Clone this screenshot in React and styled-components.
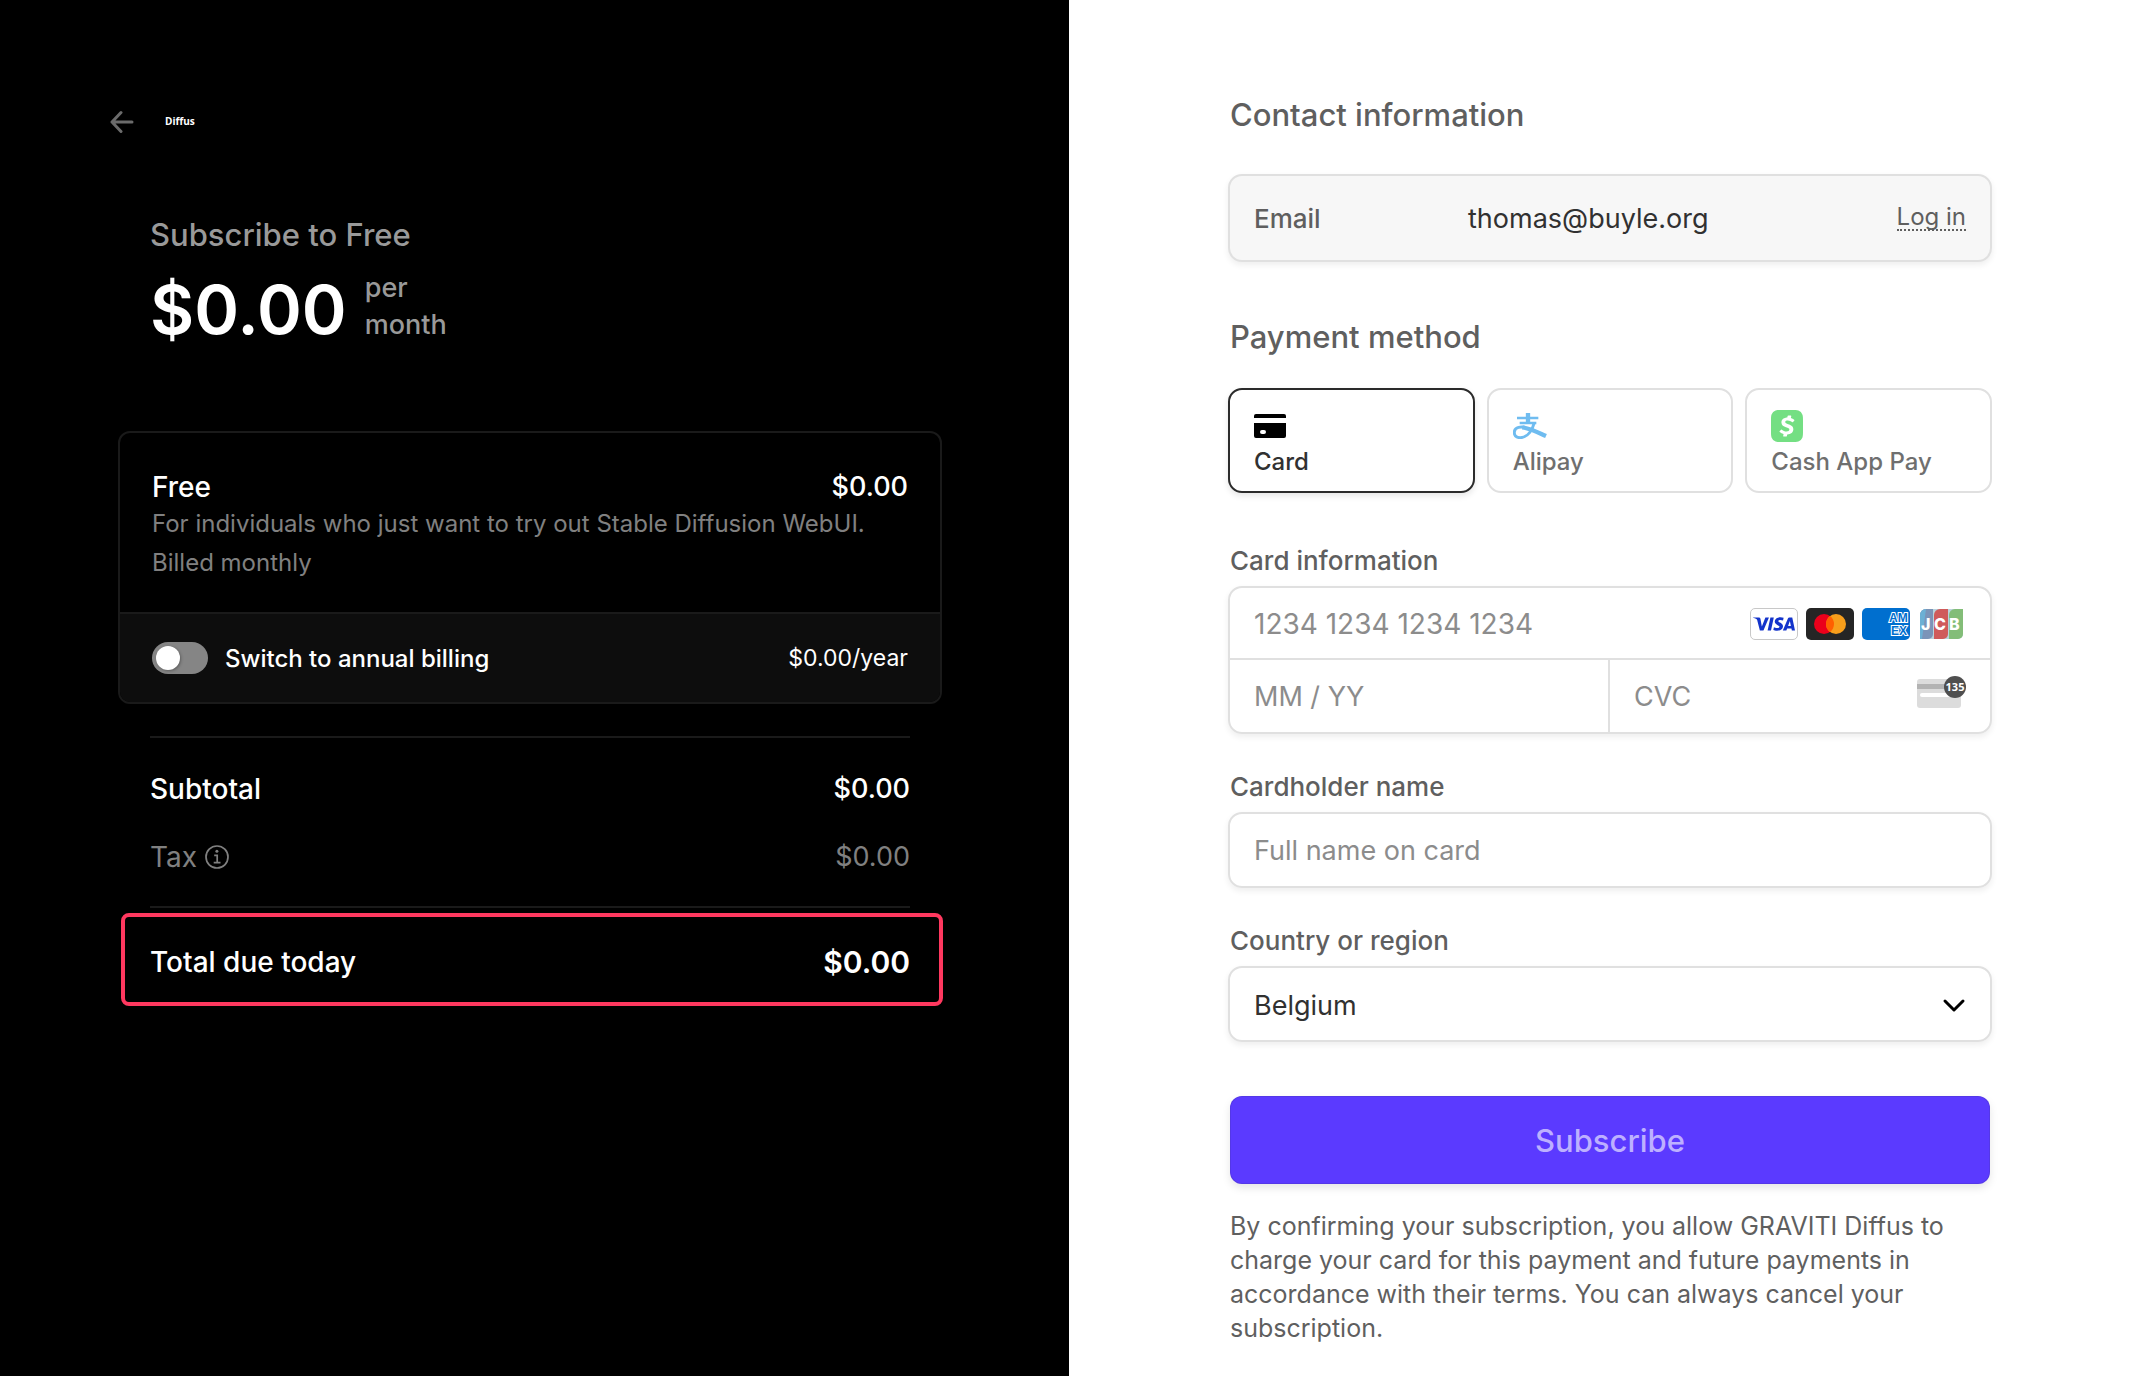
import React, { useState } from "react";
import styled, { createGlobalStyle } from "styled-components";
import { SiVisa, SiCashapp } from "react-icons/si";

const GlobalStyle = createGlobalStyle`
  *, *::before, *::after { box-sizing: border-box; }
  body {
    margin: 0;
    background: #fff;
    font-family: Inter, "Liberation Sans", sans-serif;
    -webkit-font-smoothing: antialiased;
  }
  button, input, select { font: inherit; color: inherit; }
`;

const Page = styled.div`
  display: grid;
  grid-template-columns: 1fr 1fr;
  min-height: 100vh;
`;

const SummaryPane = styled.section`
  display: flex;
  justify-content: flex-end;
  padding: 106px 159px 40px 40px;
  background: #000;
  color: #fff;
`;

const PaymentPane = styled.main`
  padding: 95px 40px 31px 161px;
  background: #fff;
  color: #313131;
`;

const Column = styled.div`
  width: 100%;
  max-width: 760px;
`;

const Header = styled.header`
  display: flex;
  align-items: center;
  gap: 31px;
  height: 32px;
  margin-left: -40px;
`;

const BackLink = styled.a`
  display: flex;
  color: #6b6b6b;
`;

const Brand = styled.span`
  padding-bottom: 2px;
  font: 700 10px/14px "Open Sans", "Noto Sans", sans-serif;
`;

const PlanTitle = styled.h1`
  margin: 77px 0 0;
  font-size: 31px;
  font-weight: 500;
  line-height: 40px;
  color: #999;
`;

const PriceRow = styled.div`
  display: flex;
  align-items: last baseline;
  gap: 18px;
  margin-top: 12px;
`;

const Price = styled.span`
  font-size: 68px;
  font-weight: 600;
  line-height: 84px;
`;

const Period = styled.span`
  width: min-content;
  font-size: 27px;
  font-weight: 500;
  line-height: 37px;
  color: #999;
`;

const PlanCard = styled.div`
  margin: 80px -32px 32px;
  border: 2px solid #1a1a1a;
  border-radius: 12px;
  overflow: hidden;
`;

const PlanBody = styled.div`
  padding: 37px 32px 30px;
`;

const PlanText = styled.p`
  margin: 0;
  font-size: 24px;
  line-height: 39px;
  color: #808080;
`;

const PlanFooter = styled.div`
  display: flex;
  align-items: center;
  height: 90px;
  padding: 0 32px;
  border-top: 2px solid #1a1a1a;
  background: #0d0d0d;
  font-size: 23px;
`;

const SwitchLabel = styled.label`
  display: flex;
  align-items: center;
  gap: 17px;
  margin-right: auto;
  font-size: 24px;
  font-weight: 500;
`;

const Switch = styled.input`
  appearance: none;
  display: flex;
  width: 56px;
  height: 32px;
  margin: 0;
  padding: 4px;
  border-radius: 16px;
  background: #858585;
  cursor: pointer;

  &::before {
    content: "";
    width: 24px;
    height: 24px;
    border-radius: 50%;
    background: #fff;
    box-shadow: 1px 1px 3px rgba(0, 0, 0, 0.3);
  }
  &:checked { justify-content: flex-end; }
`;

const Line = styled.div`
  display: flex;
  align-items: center;
  justify-content: space-between;
  font-size: 28px;
  font-weight: ${(p) => (p.$muted ? 400 : 500)};
  line-height: 34px;
  color: ${(p) => (p.$muted ? "#808080" : "#fff")};
`;

const Amount = styled.span`
  font-size: ${(p) => (p.$total ? 30 : 27)}px;
  font-weight: ${(p) => (p.$total ? 600 : "inherit")};
`;

const Totals = styled.div`
  display: flex;
  flex-direction: column;
  gap: 34px;
  padding: 34px 0 32px;
  border: solid #1a1a1a;
  border-width: 2px 0;
`;

const TaxLabel = styled.span`
  display: flex;
  align-items: center;
  gap: 8px;
`;

const TotalBox = styled.div`
  margin: 5px -33px 0 -29px;
  padding: 28px 29px 23px 25px;
  border: 4px solid #ff385f;
  border-radius: 8px;
`;

const SectionTitle = styled.h2`
  margin: 0;
  font-size: 31px;
  font-weight: 500;
  line-height: 40px;
  color: #5f5f5f;
`;

const Outlined = styled.div`
  margin: 0 -2px;
  border: 2px solid #e0e0e0;
  border-radius: 14px;
  box-shadow: 0 3px 6px rgba(0, 0, 0, 0.07);
`;

const ContactBox = styled(Outlined)`
  display: flex;
  align-items: center;
  height: 88px;
  margin-top: 39px;
  margin-bottom: 55px;
  padding: 0 24px;
  background: #f7f7f7;
`;

const ContactLabel = styled.span`
  flex: 0 0 214px;
  font-size: 26px;
  font-weight: 500;
  color: #5f5f5f;
`;

const ContactValue = styled.span`
  flex: 1;
  font-size: 27px;
`;

const LoginLink = styled.a`
  border-bottom: 2px dotted #5f5f5f;
  font-size: 24px;
  line-height: 24px;
  color: #5f5f5f;
  text-decoration: none;
`;

const Methods = styled.div`
  display: grid;
  grid-template-columns: repeat(3, 1fr);
  gap: 12px;
  margin: 31px -2px 52px;
`;

const Method = styled.button`
  display: flex;
  flex-direction: column;
  align-items: flex-start;
  gap: 3px;
  height: 105px;
  padding: 18px 24px 14px;
  border: 2px solid ${(p) => (p.$active ? "#2b2b2b" : "#e0e0e0")};
  border-radius: 14px;
  background: #fff;
  box-shadow: ${(p) => (p.$active ? "0 3px 6px rgba(0, 0, 0, 0.1)" : "none")};
  color: ${(p) => (p.$active ? "#313131" : "#6f6f6f")};
  font-size: 24px;
  font-weight: 500;
  line-height: 30px;
  cursor: pointer;
`;

const MethodIcon = styled.span`
  display: flex;
  align-items: center;
  height: 36px;
`;

const FieldLabel = styled.label`
  display: block;
  margin-bottom: 9px;
  font-size: 26px;
  font-weight: 500;
  line-height: 32px;
  color: #5f5f5f;
`;

const CardFields = styled(Outlined)`
  display: grid;
  grid-template-columns: 1fr 1fr;
  margin-bottom: 37px;
`;

const Cell = styled.div`
  display: flex;
  align-items: center;
  grid-column: ${(p) => (p.$wide ? "1 / -1" : "auto")};
  min-width: 0;
  height: 72px;
  padding: ${(p) => (p.$wide ? "2px" : "0")} 24px 0;
  border: 0 solid #e0e0e0;
  border-bottom-width: ${(p) => (p.$wide ? 2 : 0)}px;
  border-right-width: ${(p) => (p.$divided ? 2 : 0)}px;
`;

const TextInput = styled.input`
  flex: 1;
  width: 100%;
  min-width: 0;
  height: 68px;
  padding: 0;
  border: 0;
  outline: 0;
  background: transparent;
  font-size: ${(p) => (p.$digits ? 28 : 27)}px;

  &::placeholder { color: #8c8c8c; opacity: 1; }
`;

const Brands = styled.div`
  display: flex;
  gap: 8px;
`;

const BrandCard = styled.span`
  display: flex;
  align-items: center;
  justify-content: center;
  width: 48px;
  height: 32px;
  border: ${(p) => (p.$outlined ? "1px solid #c8c8c8" : "0")};
  border-radius: 5px;
  background: ${(p) => p.$background || "#fff"};
  overflow: hidden;

  svg { flex: none; }
`;

const FieldBox = styled(Outlined)`
  display: flex;
  align-items: center;
  height: 76px;
  margin-bottom: ${(p) => (p.$last ? 54 : 37)}px;
  padding: 0 24px;
`;

const CountrySelect = styled.select`
  appearance: none;
  flex: 1;
  height: 72px;
  padding: 2px 0 0;
  border: 0;
  outline: 0;
  background: transparent;
  font-size: 27px;
`;

const SubscribeButton = styled.button`
  display: block;
  width: 100%;
  height: 88px;
  border: 0;
  border-radius: 12px;
  background: #5b3aff;
  box-shadow: inset 0 0 0 1px rgba(50, 50, 93, 0.15), 0 4px 8px rgba(0, 0, 0, 0.1);
  color: #bdb0ff;
  font-size: 31px;
  font-weight: 500;
  cursor: pointer;
`;

const Legal = styled.p`
  margin: 25px 0 0;
  font-size: 25px;
  line-height: 34px;
  color: #5f5f5f;
`;

const ArrowLeftIcon = () => (
  <svg width="24" height="24" viewBox="0 0 24 24" fill="none" stroke="currentColor" strokeWidth="3" strokeLinecap="round" strokeLinejoin="round" aria-hidden="true">
    <path d="M22 12H2M11 2.500L2 12l9 9.500" />
  </svg>
);

const InfoIcon = () => (
  <svg width="24" height="24" viewBox="0 0 24 24" fill="none" stroke="currentColor" strokeWidth="1.700" aria-hidden="true">
    <circle cx="12" cy="12" r="11" />
    <path d="M9.200 10.300h3v7.200M8.700 17.700h6.800" />
    <circle cx="11.900" cy="6.200" r="1.500" fill="currentColor" stroke="none" />
  </svg>
);

const CardIcon = () => (
  <svg width="32" height="24" viewBox="0 0 32 24" aria-hidden="true">
    <path d="M0 4V2a2 2 0 0 1 2-2h28a2 2 0 0 1 2 2v2z" />
    <path fillRule="evenodd" d="M0 9h32v13a2 2 0 0 1-2 2H2a2 2 0 0 1-2-2zM8 16a2 2 0 0 0 0 4h2a2 2 0 0 0 0-4z" />
  </svg>
);

const AlipayIcon = () => (
  <svg width="34" height="26" viewBox="0 0 102 78" fill="none" stroke="#6fbcf0" aria-hidden="true">
    <path d="M45 0V30" strokeWidth="13" />
    <path d="M12 15H76M20 30H70" strokeWidth="7" />
    <path d="M64 28C59 48 46 73 22 74C8 74 3 66 4 56C6 42 24 40 38 44" strokeWidth="9" />
    <path d="M28 43C54 47 72 57 99 69" strokeWidth="13" />
  </svg>
);

const MastercardLogo = () => (
  <svg width="48" height="32" viewBox="0 0 48 32" aria-hidden="true">
    <circle cx="18" cy="16" r="10" fill="#eb001b" />
    <circle cx="30" cy="16" r="10" fill="#f79e1b" />
    <path d="M24 8a10 10 0 0 1 0 16a10 10 0 0 1 0-16z" fill="#ff5f00" />
  </svg>
);

const AmexLogo = () => (
  <svg width="48" height="32" viewBox="0 0 48 32" fill="#006fcf" stroke="#fff" strokeWidth="2" paintOrder="stroke" fontFamily="Liberation Sans, sans-serif" fontWeight="700" fontSize="12" aria-hidden="true">
    <text x="27" y="14">AM</text>
    <text x="29" y="27">EX</text>
  </svg>
);

const JcbLogo = () => (
  <svg width="48" height="32" viewBox="0 0 48 32" fill="#fff" fontFamily="Inter, sans-serif" fontWeight="800" fontSize="16" aria-hidden="true">
    <path d="M8 1H45V26a5 5 0 0 1-5 5H2V7a6 6 0 0 1 6-6z" fill="#b9d3dc" />
    <path d="M8 1H15V26a5 5 0 0 1-5 5H2V7a6 6 0 0 1 6-6z" fill="#7b94b8" />
    <path d="M22 1H30V26a5 5 0 0 1-5 5H16V7a6 6 0 0 1 6-6z" fill="#cf5b5b" />
    <path d="M37 1H45V26a5 5 0 0 1-5 5H31V7a6 6 0 0 1 6-6z" fill="#83bd78" />
    <path d="M8 1l-4 30h-2V7a6 6 0 0 1 6-6z" fill="#6cb0d4" />
    <text x="3" y="22">J</text>
    <text x="16" y="22">C</text>
    <text x="31" y="22">B</text>
  </svg>
);

const CvcIcon = () => (
  <svg width="49" height="40" viewBox="0 0 49 40" aria-hidden="true">
    <rect x="0" y="3" width="44" height="29" rx="3" fill="#dcdcdc" />
    <rect x="0" y="8" width="44" height="5" fill="#b3b3b3" />
    <rect x="3" y="17" width="34" height="4" rx="2" fill="#fff" />
    <circle cx="38" cy="11" r="11" fill="#4f4f4f" />
    <text x="38" y="15" textAnchor="middle" fill="#fff" fontFamily="Open Sans, sans-serif" fontWeight="700" fontSize="11">135</text>
  </svg>
);

const ChevronIcon = () => (
  <svg width="24" height="24" viewBox="0 0 24 24" fill="none" stroke="#000" strokeWidth="3" strokeLinecap="round" strokeLinejoin="round" aria-hidden="true">
    <path d="M3 9l9 9 9-9" />
  </svg>
);

const METHODS = [
  { id: "card", label: "Card", icon: <CardIcon /> },
  { id: "alipay", label: "Alipay", icon: <AlipayIcon /> },
  { id: "cashapp", label: "Cash App Pay", icon: <SiCashapp size={32} color="#74df83" aria-hidden="true" /> },
];

function Summary() {
  return (
    <SummaryPane>
      <Column>
        <Header>
          <BackLink href="#back" aria-label="Back"><ArrowLeftIcon /></BackLink>
          <Brand>Diffus</Brand>
        </Header>
        <PlanTitle>Subscribe to Free</PlanTitle>
        <PriceRow>
          <Price>$0.00</Price>
          <Period>per month</Period>
        </PriceRow>
        <PlanCard>
          <PlanBody>
            <Line><span>Free</span><Amount>$0.00</Amount></Line>
            <PlanText>For individuals who just want to try out Stable Diffusion WebUI.</PlanText>
            <PlanText>Billed monthly</PlanText>
          </PlanBody>
          <PlanFooter>
            <SwitchLabel>
              <Switch type="checkbox" role="switch" />
              Switch to annual billing
            </SwitchLabel>
            <span>$0.00/year</span>
          </PlanFooter>
        </PlanCard>
        <Totals>
          <Line><span>Subtotal</span><Amount>$0.00</Amount></Line>
          <Line $muted><TaxLabel>Tax <InfoIcon /></TaxLabel><Amount>$0.00</Amount></Line>
        </Totals>
        <TotalBox>
          <Line><span>Total due today</span><Amount $total>$0.00</Amount></Line>
        </TotalBox>
      </Column>
    </SummaryPane>
  );
}

function Payment() {
  const [method, setMethod] = useState("card");
  return (
    <PaymentPane>
      <Column>
        <SectionTitle>Contact information</SectionTitle>
        <ContactBox>
          <ContactLabel>Email</ContactLabel>
          <ContactValue>thomas@buyle.org</ContactValue>
          <LoginLink href="#login">Log in</LoginLink>
        </ContactBox>

        <SectionTitle>Payment method</SectionTitle>
        <Methods>
          {METHODS.map((m) => (
            <Method key={m.id} type="button" $active={m.id === method} aria-pressed={m.id === method} onClick={() => setMethod(m.id)}>
              <MethodIcon>{m.icon}</MethodIcon>
              {m.label}
            </Method>
          ))}
        </Methods>

        <FieldLabel htmlFor="number">Card information</FieldLabel>
        <CardFields>
          <Cell $wide>
            <TextInput id="number" $digits placeholder="1234 1234 1234 1234" />
            <Brands>
              <BrandCard $outlined><SiVisa size={42} color="#1434cb" aria-hidden="true" /></BrandCard>
              <BrandCard $background="#252525"><MastercardLogo /></BrandCard>
              <BrandCard $background="#006fcf"><AmexLogo /></BrandCard>
              <BrandCard><JcbLogo /></BrandCard>
            </Brands>
          </Cell>
          <Cell $divided>
            <TextInput placeholder="MM / YY" aria-label="Expiration" />
          </Cell>
          <Cell>
            <TextInput placeholder="CVC" aria-label="CVC" />
            <CvcIcon />
          </Cell>
        </CardFields>

        <FieldLabel htmlFor="name">Cardholder name</FieldLabel>
        <FieldBox>
          <TextInput id="name" placeholder="Full name on card" />
        </FieldBox>

        <FieldLabel htmlFor="country">Country or region</FieldLabel>
        <FieldBox $last>
          <CountrySelect id="country" defaultValue="Belgium">
            <option>Belgium</option>
          </CountrySelect>
          <ChevronIcon />
        </FieldBox>

        <SubscribeButton type="submit">Subscribe</SubscribeButton>
        <Legal>
          By confirming your subscription, you allow GRAVITI Diffus to charge your card for this payment and future
          payments in accordance with their terms. You can always cancel your subscription.
        </Legal>
      </Column>
    </PaymentPane>
  );
}

export default function App() {
  return (
    <>
      <GlobalStyle />
      <Page>
        <Summary />
        <Payment />
      </Page>
    </>
  );
}
